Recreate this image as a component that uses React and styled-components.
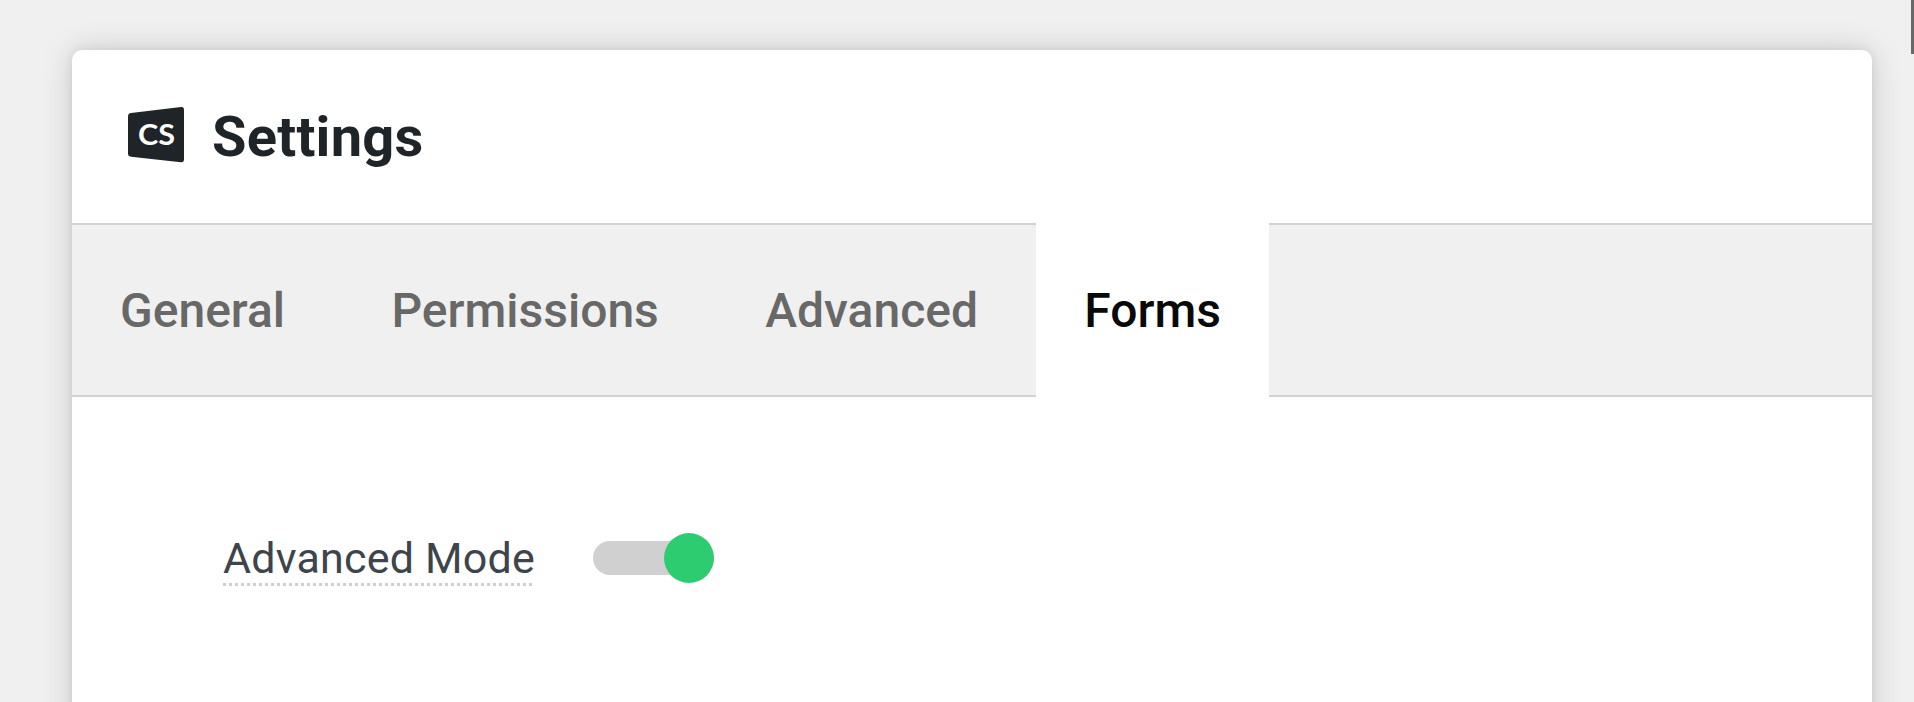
import { useState } from 'react'
import styled, { createGlobalStyle } from 'styled-components'

const GlobalStyle = createGlobalStyle`
  * {
    box-sizing: border-box;
  }
  body {
    margin: 0;
    overflow: hidden;
    background: #f0f0f0;
    font-family: Roboto, sans-serif;
  }
`

const Page = styled.div`
  position: relative;
  height: 100vh;
  padding: 50px 42px 0 72px;
  overflow: hidden;
`

const ScrollThumb = styled.div`
  position: absolute;
  top: 0;
  right: 0;
  width: 3px;
  height: 54px;
  background: #686868;
`

const Panel = styled.div`
  height: 800px;
  border-radius: 10px;
  background: #fff;
  box-shadow: 0 0 32px rgba(0, 0, 0, 0.16), 0 0 8px rgba(0, 0, 0, 0.08);
`

const Header = styled.header`
  display: flex;
  align-items: center;
  gap: 28px;
  height: 173px;
  padding: 0 56px;
`

const Logo = styled.svg`
  width: 56px;
  height: 56px;
  margin-bottom: 3px;
`

const LogoText = styled.text`
  font-family: Lato, sans-serif;
  font-size: 28px;
  font-weight: 700;
  fill: #fff;
`

const Title = styled.h1`
  margin: 0;
  color: #1f2428;
  font-size: 56px;
  font-weight: 700;
  letter-spacing: 0.25px;
  line-height: 66px;
`

const Tabs = styled.nav`
  display: flex;
  height: 174px;
  background: #f0f0f0;
  box-shadow: inset 0 2px #d3d3d3, inset 0 -2px #d3d3d3;
`

const Tab = styled.button`
  padding: 0 48px;
  border: none;
  margin-right: 10.4px;
  color: ${(p) => (p.$active ? '#090909' : '#686868')};
  background: ${(p) => (p.$active ? '#fff' : 'transparent')};
  font-family: inherit;
  font-size: 48px;
  font-weight: 500;
`

const Content = styled.main`
  padding: 131px 151px;
`

const Field = styled.div`
  display: flex;
  align-items: center;
  gap: 61px;
  height: 60px;
`

const FieldLabel = styled.label`
  width: 309px;
  height: 56px;
  color: #3d444b;
  border-bottom: 3px dotted #d0d0d0;
  font-size: 43px;
  letter-spacing: 0.2px;
  line-height: 56px;
  white-space: nowrap;
`

const Switch = styled.button`
  display: flex;
  align-items: center;
  justify-content: ${(p) => (p.$on ? 'flex-end' : 'flex-start')};
  width: 121px;
  height: 34px;
  padding: 0;
  border: none;
  border-radius: 17px;
  background: #d0d0d0;
`

const Knob = styled.span`
  flex: none;
  width: 50px;
  height: 50px;
  border-radius: 50%;
  background: ${(p) => (p.$on ? '#2ecc71' : '#fff')};
`

const tabs = ['General', 'Permissions', 'Advanced', 'Forms']

const App = () => {
  const [active, setActive] = useState('Forms')
  const [advancedMode, setAdvancedMode] = useState(true)

  return (
    <>
      <GlobalStyle />
      <Page>
        <Panel>
          <Header>
            <Logo viewBox="0 0 56 56">
              <path
                d="M3 6 L53 .1 Q56 -.2 56 2.8 V52.3 Q56 55.5 53 55.2 L3 49.7 Q0 49.3 0 46.5 V9.5 Q0 6.4 3 6Z"
                fill="#1f2428"
              />
              <LogoText x="10" y="37.7" textLength="37" lengthAdjust="spacingAndGlyphs">CS</LogoText>
            </Logo>
            <Title>Settings</Title>
          </Header>
          <Tabs>
            {tabs.map((tab) => (
              <Tab key={tab} $active={tab === active} onClick={() => setActive(tab)}>
                {tab}
              </Tab>
            ))}
          </Tabs>
          <Content>
            <Field>
              <FieldLabel>Advanced Mode</FieldLabel>
              <Switch $on={advancedMode} onClick={() => setAdvancedMode(!advancedMode)}>
                <Knob $on={advancedMode} />
              </Switch>
            </Field>
          </Content>
        </Panel>
        <ScrollThumb />
      </Page>
    </>
  )
}

export default App
